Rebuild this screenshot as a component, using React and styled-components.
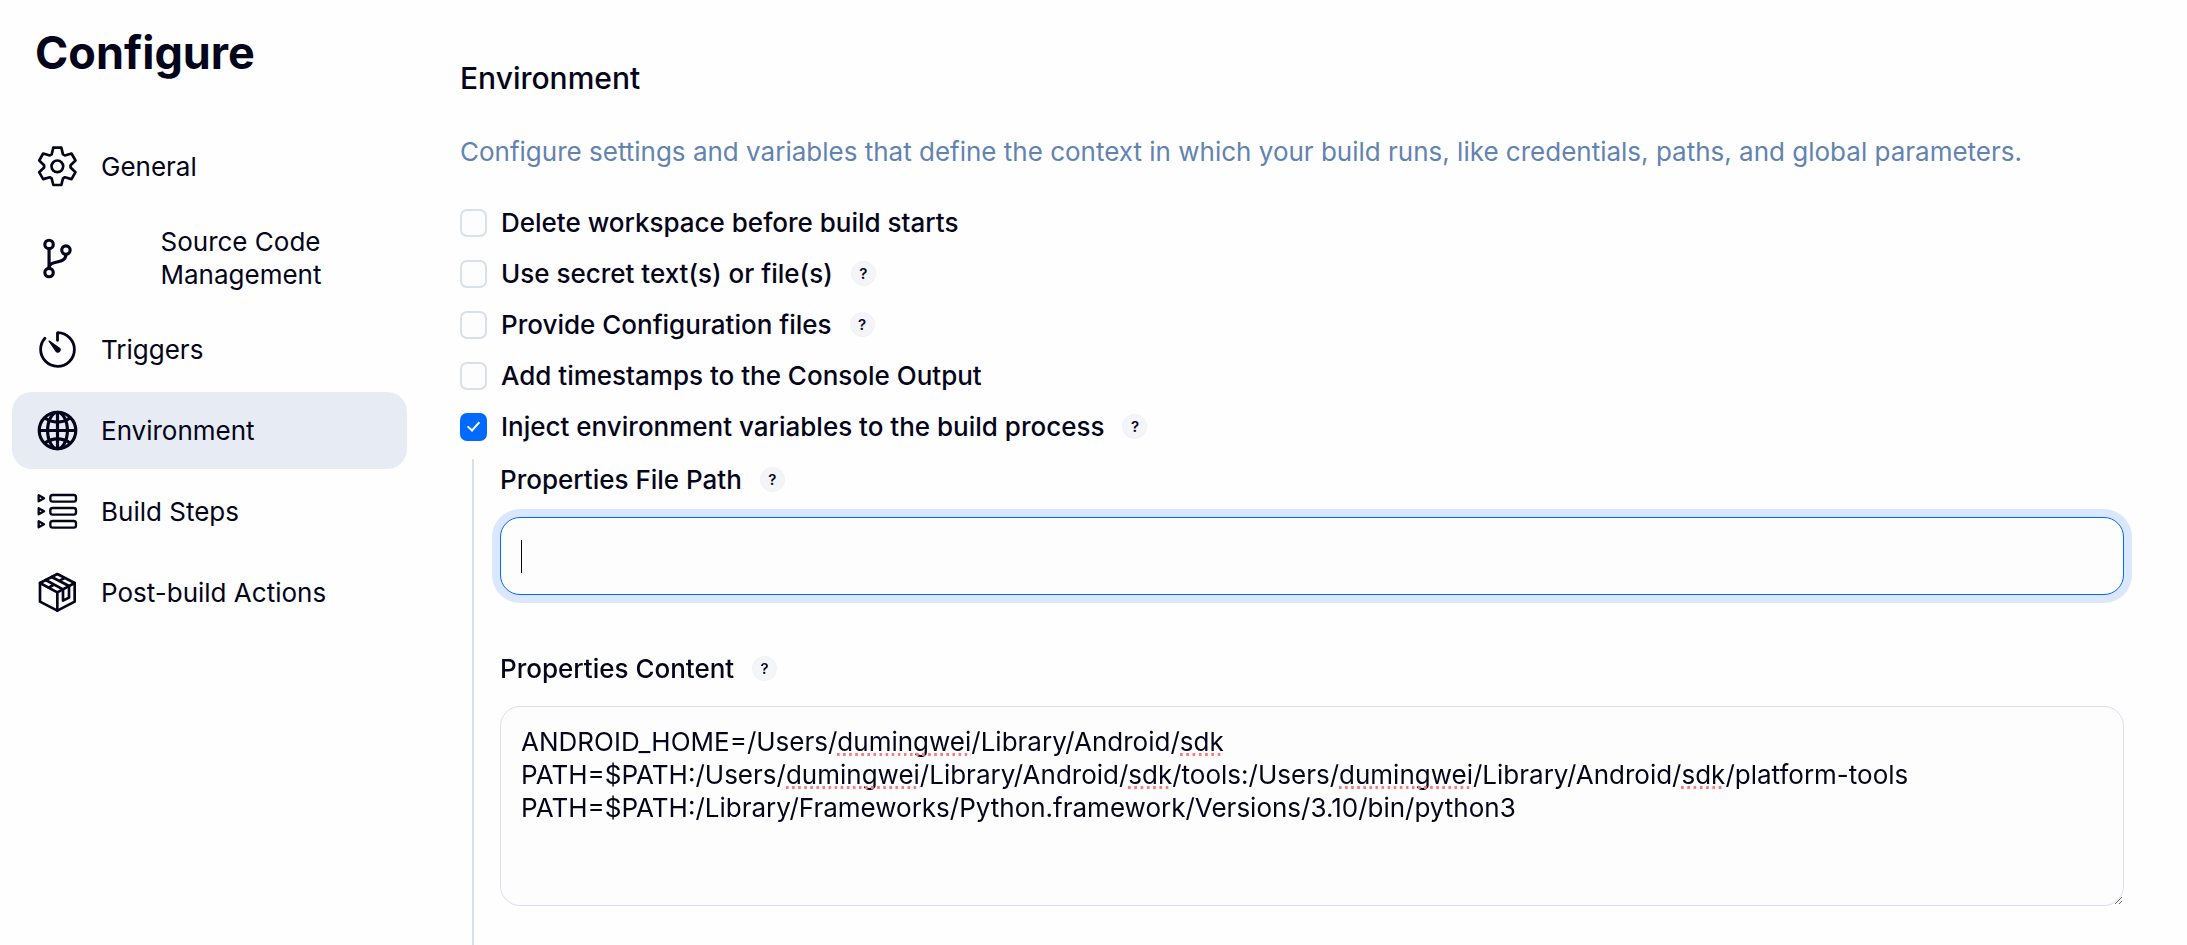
import React, { useEffect, useState } from "react";
import styled, { createGlobalStyle, css } from "styled-components";
import { IoGitBranchOutline, IoGlobeOutline, IoTimerOutline } from "react-icons/io5";

const FONT_FAMILY = 'Inter, "Liberation Sans", sans-serif';
const TEXT_SIZE = 26;

const GlobalStyle = createGlobalStyle`
  *, *::before, *::after { box-sizing: border-box; }
  body {
    margin: 0;
    background: #fefefe;
    color: #04041a;
    font-family: ${FONT_FAMILY};
    font-size: ${TEXT_SIZE}px;
    line-height: 33px;
  }
`;

const Page = styled.div`
  display: grid;
  grid-template-columns: 395px minmax(0, 1fr);
  column-gap: 53px;
  padding: 0 63px 0 12px;
`;

const Sidebar = styled.aside`
  padding-top: 24px;
`;

const PageTitle = styled.h1`
  margin: 0 0 46px;
  padding-left: 23px;
  font-size: 45px;
  font-weight: 700;
  line-height: 58px;
`;

const TaskList = styled.nav`
  display: flex;
  flex-direction: column;
  gap: 4px;
`;

const TaskLink = styled.a`
  display: flex;
  align-items: center;
  gap: 21px;
  min-height: 77px;
  padding: 0 23px;
  border-radius: 20px;
  background: ${({ $active }) => ($active ? "#e7ebf3" : "transparent")};
  color: inherit;
  text-decoration: none;

  svg {
    flex: none;
    width: 45px;
    height: 45px;
  }
`;

const TaskLabel = styled.span`
  ${({ $wrapped }) =>
    $wrapped &&
    css`
      width: 164px;
      margin: 16px auto;
    `}
`;

const Main = styled.main`
  padding-top: 60px;
`;

const SectionTitle = styled.h2`
  margin: 0;
  font-size: 30px;
  font-weight: 500;
  line-height: 36px;
`;

const Description = styled.p`
  margin: 39px 0 38px;
  color: #6283b1;
`;

const OptionList = styled.div`
  display: flex;
  flex-direction: column;
  gap: 18px;
`;

const LabelRow = styled.div`
  display: flex;
  align-items: center;
  gap: 18px;
  font-weight: 500;
`;

const OptionLabel = styled.label`
  display: flex;
  align-items: center;
  gap: 14px;
`;

const Checkbox = styled.input`
  appearance: none;
  flex: none;
  display: grid;
  place-items: center;
  width: 27px;
  height: 28px;
  margin: 0;
  border: 2px solid #d9dfec;
  border-radius: 7px;
  background: #fdfdfd;

  &:checked {
    border-color: #0069ff;
    background: #0069ff;
  }

  &:checked::before {
    content: "";
    width: 7px;
    height: 12px;
    margin-bottom: 3px;
    border: solid #fff;
    border-width: 0 2px 2px 0;
    transform: rotate(42deg);
  }
`;

const HelpButton = styled.button`
  width: 25px;
  height: 25px;
  padding: 0;
  border: 1px solid #eff1f6;
  border-radius: 50%;
  background: #f4f5f9;
  color: inherit;
  font: 600 15px/23px Inter, sans-serif;
  text-align: center;
`;

const NestedFields = styled.div`
  display: flex;
  flex-direction: column;
  gap: 57px;
  margin: 16px 0 0 12px;
  padding: 4px 0 39px 26px;
  border-left: 2px solid #d9dfec;
`;

const Field = styled.div`
  display: flex;
  flex-direction: column;
  gap: 21px;
`;

const Layers = styled.div`
  display: grid;

  > * {
    grid-area: 1 / 1;
  }
`;

const controlBox = css`
  width: 100%;
  margin: 0;
  border: 1px solid #d9dfec;
  border-radius: 20px;
  background: #fdfdfd;
  color: inherit;
  font: inherit;
  outline: none;
`;

const TextInput = styled.input`
  ${controlBox}
  height: 78px;
  padding: 0 20px;
  border-color: #0069ff;
  box-shadow: 0 0 0 8px #d9e7ff;
  caret-color: transparent;
`;

const Caret = styled.span`
  align-self: center;
  width: 1px;
  height: 33px;
  margin-left: 21px;
  background: #04041a;
  pointer-events: none;
`;

const TextArea = styled.textarea`
  ${controlBox}
  display: block;
  height: 200px;
  padding: 18px 20px;
  white-space: pre;
  resize: vertical;
`;

const SpellingLayer = styled.div`
  margin: 19px 21px;
  overflow: hidden;
  pointer-events: none;
`;

const SpellingLine = styled.div`
  position: relative;
  height: 33px;
`;

const SpellingMark = styled.span`
  position: absolute;
  top: 28px;
  height: 3px;
  background: linear-gradient(90deg, #ff7b7b 50%, transparent 50%) 0 0 / 6px 3px round;
`;

const StrongGlobe = styled(IoGlobeOutline)`
  * {
    stroke-width: 36px;
  }
`;

const StrongBranch = styled(IoGitBranchOutline)`
  * {
    stroke-width: 36px;
  }
`;

const toothCorners = [[-17, -36], [-12, -56], [12, -56], [17, -36]];
const gearPoints = [0, 60, 120, 180, 240, 300]
  .flatMap((deg) => {
    const a = (deg * Math.PI) / 180;
    return toothCorners.map(([x, y]) => [
      x * Math.cos(a) - y * Math.sin(a),
      x * Math.sin(a) + y * Math.cos(a),
    ].map((n) => n.toFixed(1)).join(","));
  })
  .join(" ");

const lineProps = {
  fill: "none",
  stroke: "currentColor",
  strokeLinecap: "round",
  strokeLinejoin: "round",
};

const GearIcon = () => (
  <svg viewBox="-67 -67 135 135" strokeWidth="8" aria-hidden="true" {...lineProps}>
    <polygon points={gearPoints} />
    <circle r="17.5" />
  </svg>
);

const StepsIcon = () => (
  <svg viewBox="-67 -67 135 135" strokeWidth="7" aria-hidden="true" {...lineProps}>
    {[-39, 0, 39].map((y) => (
      <g key={y}>
        <path d={`M-56 ${y - 9}V${y + 9}L-40 ${y}Z`} />
        <rect x="-21" y={y - 10} width="77" height="20" rx="7" />
      </g>
    ))}
  </svg>
);

const PackageIcon = () => (
  <svg viewBox="-67 -67 135 135" strokeWidth="8" aria-hidden="true" {...lineProps}>
    <path d="M0-55L52-28V28L0 55L-52 28V-28Z" />
    <path d="M-52-28L0 0L52-28M0 0V55" />
    <path d="M-35-37L17-9V25L35 16V-19L-17-46M-26-14L-12-22M8-36L20-42" />
  </svg>
);

const tasks = [
  { label: "General", icon: GearIcon },
  { label: "Source Code Management", icon: StrongBranch, wrapped: true },
  { label: "Triggers", icon: IoTimerOutline },
  { label: "Environment", icon: StrongGlobe, active: true },
  { label: "Build Steps", icon: StepsIcon },
  { label: "Post-build Actions", icon: PackageIcon },
];

const options = [
  { id: "cleanup", label: "Delete workspace before build starts" },
  { id: "secrets", label: "Use secret text(s) or file(s)", help: true },
  { id: "config-files", label: "Provide Configuration files", help: true },
  { id: "timestamps", label: "Add timestamps to the Console Output" },
  { id: "inject", label: "Inject environment variables to the build process", help: true, checked: true },
];

const initialContent = [
  "ANDROID_HOME=/Users/dumingwei/Library/Android/sdk",
  "PATH=$PATH:/Users/dumingwei/Library/Android/sdk/tools:/Users/dumingwei/Library/Android/sdk/platform-tools",
  "PATH=$PATH:/Library/Frameworks/Python.framework/Versions/3.10/bin/python3",
].join("\n");

function measureMarks(text) {
  const context = document.createElement("canvas").getContext("2d");
  context.font = `${TEXT_SIZE}px ${FONT_FAMILY}`;
  return text.split("\n").map((line) =>
    [...line.matchAll(/dumingwei|sdk/g)].map((match) => ({
      left: context.measureText(line.slice(0, match.index)).width,
      width: context.measureText(match[0]).width,
    }))
  );
}

const Help = ({ topic }) => (
  <HelpButton type="button" aria-label={`Help for feature: ${topic}`}>?</HelpButton>
);

export default function App() {
  const [content, setContent] = useState(initialContent);
  const [lines, setLines] = useState([]);

  useEffect(() => {
    setLines(measureMarks(content));
  }, [content]);

  return (
    <>
      <GlobalStyle />
      <Page>
        <Sidebar>
          <PageTitle>Configure</PageTitle>
          <TaskList>
            {tasks.map(({ label, icon: Icon, active, wrapped }) => (
              <TaskLink key={label} href="#" $active={active}>
                <Icon />
                <TaskLabel $wrapped={wrapped}>{label}</TaskLabel>
              </TaskLink>
            ))}
          </TaskList>
        </Sidebar>
        <Main>
          <SectionTitle>Environment</SectionTitle>
          <Description>
            Configure settings and variables that define the context in which your build runs, like
            credentials, paths, and global parameters.
          </Description>
          <OptionList>
            {options.map(({ id, label, help, checked }) => (
              <LabelRow key={id}>
                <OptionLabel htmlFor={id}>
                  <Checkbox type="checkbox" id={id} defaultChecked={checked} />
                  {label}
                </OptionLabel>
                {help && <Help topic={label} />}
              </LabelRow>
            ))}
          </OptionList>
          <NestedFields>
            <Field>
              <LabelRow>
                <label htmlFor="file-path">Properties File Path</label>
                <Help topic="Properties File Path" />
              </LabelRow>
              <Layers>
                <TextInput id="file-path" type="text" autoFocus />
                <Caret />
              </Layers>
            </Field>
            <Field>
              <LabelRow>
                <label htmlFor="content">Properties Content</label>
                <Help topic="Properties Content" />
              </LabelRow>
              <Layers>
                <TextArea
                  id="content"
                  spellCheck={false}
                  value={content}
                  onChange={(event) => setContent(event.target.value)}
                />
                <SpellingLayer aria-hidden="true">
                  {lines.map((marks, row) => (
                    <SpellingLine key={row}>
                      {marks.map((mark) => (
                        <SpellingMark key={mark.left} style={mark} />
                      ))}
                    </SpellingLine>
                  ))}
                </SpellingLayer>
              </Layers>
            </Field>
          </NestedFields>
        </Main>
      </Page>
    </>
  );
}
